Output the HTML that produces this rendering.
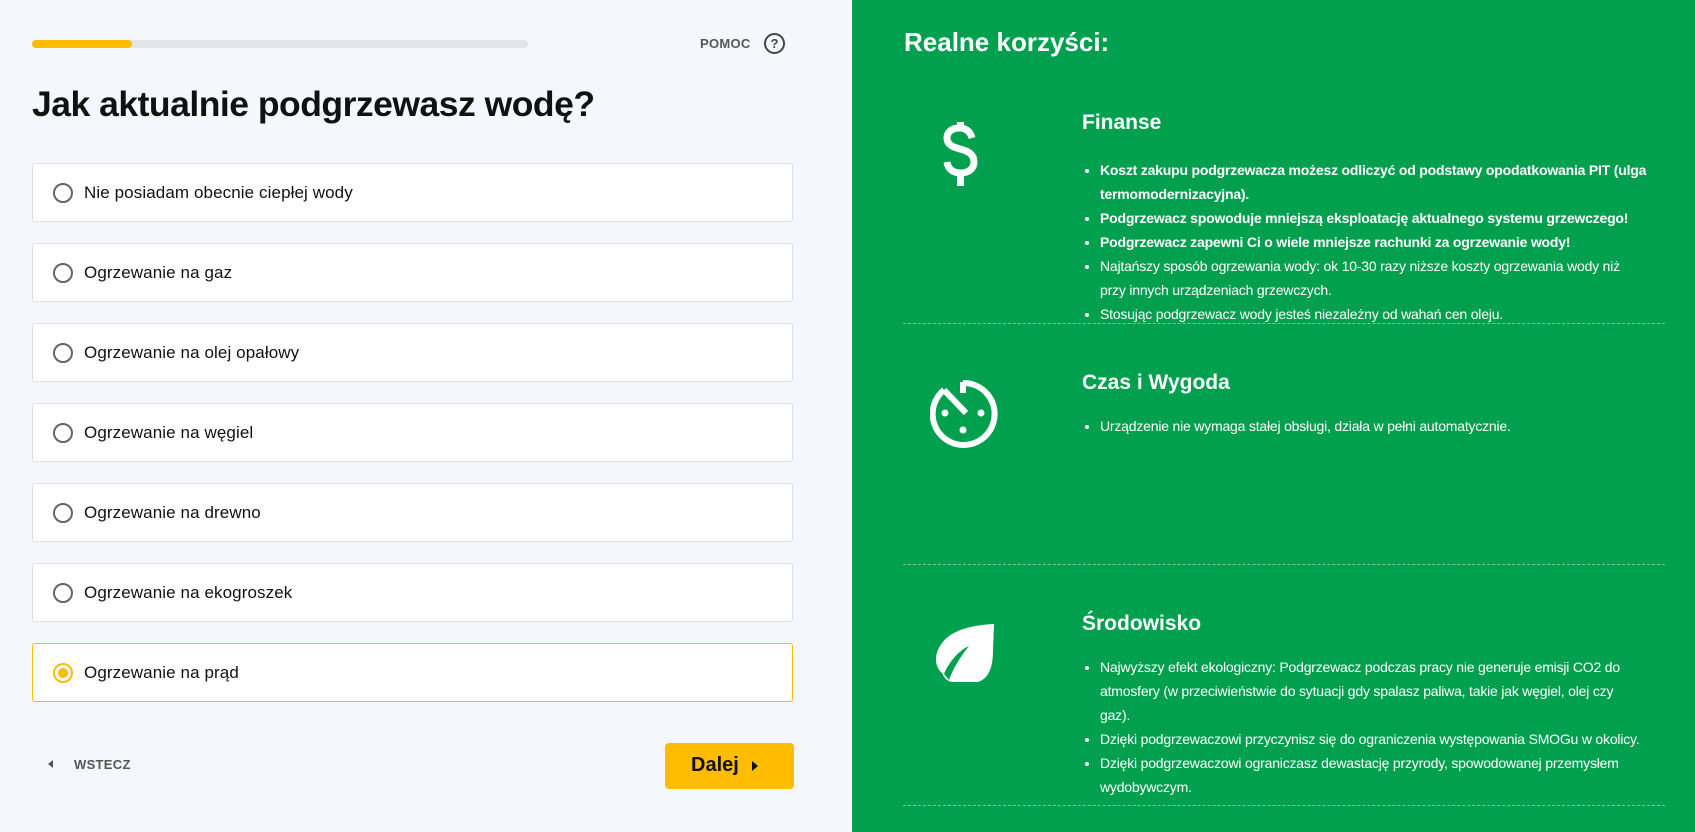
<!DOCTYPE html>
<html><head><meta charset="utf-8"><style>
*{margin:0;padding:0;box-sizing:border-box}
body{width:1695px;height:832px;overflow:hidden;font-family:"Liberation Sans",Arial,sans-serif;background:#f4f7fb;position:relative}
.left{position:absolute;left:0;top:0;width:852px;height:832px;background:#f4f7fb}
.right{position:absolute;left:852px;top:0;width:843px;height:832px;background:#00a04e;color:#fff}
.bar{position:absolute;left:32px;top:40px;width:496px;height:8px;border-radius:4px;background:#e2e5e8}
.bar i{position:absolute;left:0;top:0;width:100px;height:8px;border-radius:4px;background:#ffbc00}
.pomoc{position:absolute;left:700px;top:36px;font-size:13px;font-weight:bold;color:#555;letter-spacing:.3px}
.q{position:absolute;left:764px;top:33px;width:21px;height:21px;border:2px solid #444;border-radius:50%;font-size:13px;font-weight:bold;color:#444;text-align:center;line-height:17px}
h1{position:absolute;left:32px;top:84px;font-size:35.5px;font-weight:bold;color:#111;letter-spacing:-.5px}
.opt{position:absolute;left:32px;width:761px;height:59px;background:#fff;border:1px solid #dcdfe3;border-radius:3px}
.opt .r{position:absolute;left:20px;top:19px;width:20px;height:20px;border:2px solid #666;border-radius:50%}
.opt span{position:absolute;left:51px;top:19px;font-size:17px;color:#111;letter-spacing:.1px}
.opt.sel{border-color:#ffbc00}
.opt.sel .r{border-color:#ffbc00}
.opt.sel .r:after{content:"";position:absolute;left:3px;top:3px;width:10px;height:10px;border-radius:50%;background:#ffbc00}
.back{position:absolute;left:48px;top:757px;font-size:13px;font-weight:bold;color:#555;letter-spacing:.3px}
.back b{display:inline-block;width:0;height:0;border-top:4px solid transparent;border-bottom:4px solid transparent;border-right:5px solid #555;margin-right:21px;vertical-align:1px}
.btn{position:absolute;left:665px;top:743px;width:129px;height:46px;background:#ffbc00;border-radius:4px;font-size:20px;font-weight:bold;color:#111}
.btn span{position:absolute;left:26px;top:11px}
.btn b{position:absolute;left:87px;top:18px;width:0;height:0;border-top:5px solid transparent;border-bottom:5px solid transparent;border-left:6px solid #111}
.rt{position:absolute;left:52px;top:27px;font-size:26px;font-weight:bold}
ul{position:absolute;left:248px;list-style:disc;font-size:14px;line-height:24px;white-space:nowrap;letter-spacing:-.2px}
.dash{position:absolute;left:51px;width:762px;border-top:1px dashed rgba(255,255,255,.45)}
svg{position:absolute}
</style></head><body>
<div class="left">
<div class="bar"><i></i></div>
<div class="pomoc">POMOC</div><div class="q">?</div>
<h1>Jak aktualnie podgrzewasz wodę?</h1>
<div class="opt" style="top:163px"><div class="r"></div><span>Nie posiadam obecnie ciepłej wody</span></div>
<div class="opt" style="top:243px"><div class="r"></div><span>Ogrzewanie na gaz</span></div>
<div class="opt" style="top:323px"><div class="r"></div><span>Ogrzewanie na olej opałowy</span></div>
<div class="opt" style="top:403px"><div class="r"></div><span>Ogrzewanie na węgiel</span></div>
<div class="opt" style="top:483px"><div class="r"></div><span>Ogrzewanie na drewno</span></div>
<div class="opt" style="top:563px"><div class="r"></div><span>Ogrzewanie na ekogroszek</span></div>
<div class="opt sel" style="top:643px"><div class="r"></div><span>Ogrzewanie na prąd</span></div>
<div class="back"><b></b>WSTECZ</div>
<div class="btn"><span>Dalej</span><b></b></div>
</div>
<div class="right">
<div class="rt">Realne korzyści:</div>
<svg style="left:85px;top:118px" width="50" height="72" viewBox="0 0 50 72"><path d="M35 20 C33 12 27 10 22 10 C15 10 10 14 10 20 C10 27 16 29 23 31 C31 33 37 36 37 44 C37 51 31 55 24 55 C16 55 11 51 10 44" fill="none" stroke="#fff" stroke-width="7"/><rect x="20" y="4" width="7" height="8" fill="#fff"/><rect x="20" y="53" width="7" height="15" fill="#fff"/></svg>
<h2 style="position:absolute;left:230px;top:111px;font-size:21px;font-weight:bold">Finanse</h2>
<ul style="top:158px">
<li><b>Koszt zakupu podgrzewacza możesz odliczyć od podstawy opodatkowania PIT (ulga<br>termomodernizacyjna).</b></li>
<li><b>Podgrzewacz spowoduje mniejszą eksploatację aktualnego systemu grzewczego!</b></li>
<li><b>Podgrzewacz zapewni Ci o wiele mniejsze rachunki za ogrzewanie wody!</b></li>
<li>Najtańszy sposób ogrzewania wody: ok 10-30 razy niższe koszty ogrzewania wody niż<br>przy innych urządzeniach grzewczych.</li>
<li>Stosując podgrzewacz wody jesteś niezależny od wahań cen oleju.</li>
</ul>
<div class="dash" style="top:323px"></div>
<svg style="left:78px;top:376px" width="70" height="72" viewBox="0 0 70 72"><path d="M33 7 A31 31 0 1 1 14 14" fill="none" stroke="#fff" stroke-width="6"/><path d="M33 6 V17" stroke="#fff" stroke-width="6"/><path d="M14 14 L36 37" stroke="#fff" stroke-width="6"/><circle cx="15" cy="37" r="3.5" fill="#fff"/><circle cx="51" cy="37" r="3.5" fill="#fff"/><circle cx="33" cy="54" r="3.5" fill="#fff"/></svg>
<h2 style="position:absolute;left:230px;top:371px;font-size:21px;font-weight:bold">Czas i Wygoda</h2>
<ul style="top:414px"><li>Urządzenie nie wymaga stałej obsługi, działa w pełni automatycznie.</li></ul>
<div class="dash" style="top:564px"></div>
<svg style="left:68px;top:610px" width="90" height="90" viewBox="0 0 90 90"><path d="M74 14 C55 15 32 19 22 33 C13 45 15 57 22 63 C24 67 26 71 32 72 L58 72 C70 68 73 55 73 40 Z" fill="#fff"/><path d="M24 64 C30 50 40 40 49 36 C42 45 34 56 29 70 Z" fill="#00a04e"/></svg>
<h2 style="position:absolute;left:230px;top:612px;font-size:21px;font-weight:bold">Środowisko</h2>
<ul style="top:655px">
<li>Najwyższy efekt ekologiczny: Podgrzewacz podczas pracy nie generuje emisji CO2 do<br>atmosfery (w przeciwieństwie do sytuacji gdy spalasz paliwa, takie jak węgiel, olej czy<br>gaz).</li>
<li>Dzięki podgrzewaczowi przyczynisz się do ograniczenia występowania SMOGu w okolicy.</li>
<li>Dzięki podgrzewaczowi ograniczasz dewastację przyrody, spowodowanej przemysłem<br>wydobywczym.</li>
</ul>
<div class="dash" style="top:805px"></div>
</div>
</body></html>
